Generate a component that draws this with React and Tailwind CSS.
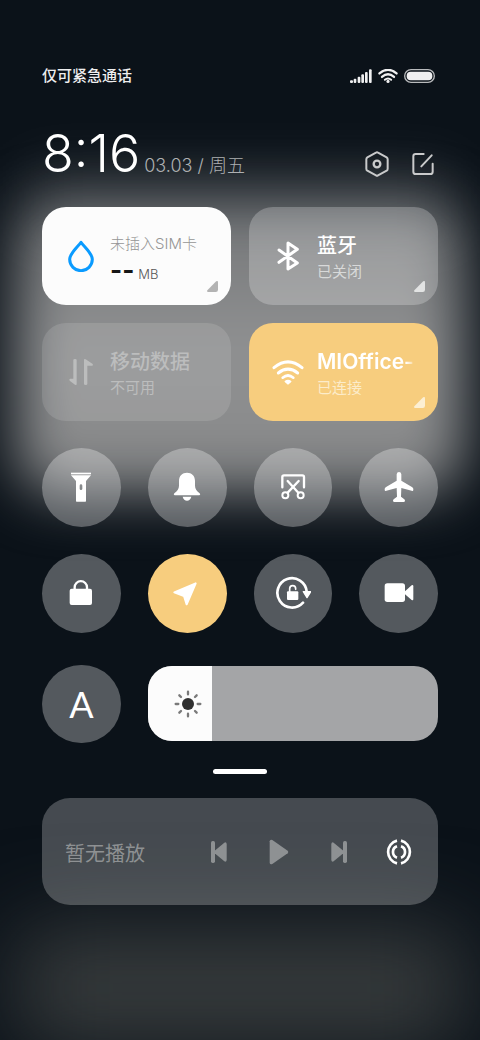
import { useState } from "react";

function Glyph({ children, className = "size-8" }) {
  return (
    <svg viewBox="-48 -48 96 96" className={className} fill="currentColor" aria-hidden="true">
      {children}
    </svg>
  );
}

const line = {
  fill: "none",
  stroke: "currentColor",
  strokeLinecap: "round",
  strokeLinejoin: "round",
};

const DropIcon = () => (
  <Glyph className="size-8 text-[#0a9bff]">
    <path {...line} strokeWidth="9" d="M0 -41C10 -27 34 -8 34 10A34 34 0 0 1 -34 10C-34 -8 -10 -27 0 -41Z" />
  </Glyph>
);

const BluetoothIcon = () => (
  <Glyph>
    <path {...line} strokeWidth="9" d="M-27 -18L28 21L0 39V-39L28 -20L-27 19" />
  </Glyph>
);

const DataIcon = () => (
  <Glyph>
    <path d="M-23 -36Q-23 -39 -18 -39T-13 -36V36Q-13 41 -18 38L-34 26Q-37 20 -32 20H-23Z" />
    <path d="M19 36Q19 39 14 39T9 36V-36Q9 -41 14 -38L35 -24Q38 -19 33 -19H19Z" />
  </Glyph>
);

const WifiIcon = () => (
  <Glyph>
    <path {...line} strokeWidth="9" d="M-42 -13Q0 -48 42 -13" />
    <path {...line} strokeWidth="9" d="M-29 3Q0 -20 29 3" />
    <path {...line} strokeWidth="8" d="M-16 17Q0 4 16 17" />
    <path d="M-10 27Q0 19 10 27Q11 29 9 31L2 37Q0 39 -2 37L-9 31Q-11 29 -10 27Z" />
  </Glyph>
);

const TorchIcon = () => (
  <Glyph>
    <path d="M-30 -43H30V-38H-30Z" />
    <path
      fillRule="evenodd"
      d="M-30 -35H30L15 -18V42Q15 44 13 44H-13Q-15 44 -15 42V-18ZM-4 -4V5A4 4 0 0 0 4 5V-4A4 4 0 0 0 -4 -4Z"
    />
  </Glyph>
);

const BellIcon = () => (
  <Glyph>
    <path d="M-24 -18C-24 -34 -14 -43 0 -43S24 -34 24 -18V-4C24 6 30 12 38 19Q42 24 37 25H-37Q-42 24 -38 19C-30 12 -24 6 -24 -4Z" />
    <path d="M-13 29H13C11 37 6 41 0 41S-11 37 -13 29Z" />
  </Glyph>
);

const ScissorsIcon = () => (
  <Glyph>
    <path {...line} strokeWidth="7" d="M-32 1V-30Q-32 -35 -27 -35H28Q33 -35 33 -30V1" />
    <path {...line} strokeWidth="7" d="M-16 17L17 -18M16 17L-16 -18" />
    <circle {...line} strokeWidth="6" cx="-23" cy="25" r="9" />
    <circle {...line} strokeWidth="6" cx="23" cy="25" r="9" />
  </Glyph>
);

const PlaneIcon = () => (
  <Glyph>
    <path d="M-7 -38Q-6 -45 0 -45T7 -38V-19L40 1Q44 5 43 9Q42 13 38 11L7 3L6 29L16 37Q18 39 18 42Q17 45 14 45H-14Q-17 45 -18 42Q-18 39 -16 37L-6 29L-7 3L-38 11Q-42 13 -43 9Q-44 5 -40 1L-7 -19Z" />
  </Glyph>
);

const LockIcon = () => (
  <Glyph>
    <rect x="-34" y="-13" width="67" height="49" rx="6" />
    <path {...line} strokeWidth="7" d="M-19 -12V-17A18.500 18.500 0 0 1 18 -17V-12" />
  </Glyph>
);

const LocationIcon = () => (
  <Glyph>
    <path stroke="currentColor" strokeWidth="6" strokeLinejoin="round" d="M26 -29L-38 -2L-9 9L-1 34Z" />
  </Glyph>
);

const RotationIcon = () => (
  <Glyph className="size-9">
    <g transform="scale(0.889)">
      <path {...line} strokeWidth="8" d="M30 29A44 44 0 1 1 41 -4" />
      <path stroke="currentColor" strokeWidth="4" strokeLinejoin="round" d="M31 -4H53L42 14Z" />
      <rect x="-18" y="-5" width="34" height="26" rx="3" />
      <path {...line} strokeWidth="5" d="M-10 -4V-13A9 9 0 0 1 8 -13V-11" />
    </g>
  </Glyph>
);

const VideoIcon = () => (
  <Glyph>
    <rect x="-43" y="-29" width="61" height="56" rx="8" />
    <path d="M18 -5L38 -23Q43 -26 43 -20V18Q43 24 38 21L18 4Z" />
  </Glyph>
);

const SunIcon = () => (
  <Glyph>
    <circle r="18" fill="#303030" />
    <path
      {...line}
      stroke="#7a7a7a"
      strokeWidth="7"
      d="M0 -37V-29M0 29V37M-37 0H-29M29 0H37M-26 -26L-21 -21M21 21L26 26M-26 26L-21 21M21 -21L26 -26"
    />
  </Glyph>
);

const PreviousIcon = () => (
  <Glyph>
    <rect x="-24" y="-33" width="12" height="66" rx="5" />
    <path d="M-13 -4L16 -28Q22 -31 23 -24V24Q22 31 16 28L-13 4Q-16 0 -13 -4Z" />
  </Glyph>
);

const NextIcon = () => (
  <Glyph>
    <rect x="12" y="-33" width="12" height="66" rx="5" />
    <path d="M13 -4L-16 -28Q-22 -31 -23 -24V24Q-22 31 -16 28L13 4Q16 0 13 -4Z" />
  </Glyph>
);

const PlayIcon = () => (
  <Glyph>
    <path d="M-28 -32Q-27 -39 -20 -36L26 -4Q30 0 26 4L-20 36Q-27 39 -28 32Z" />
  </Glyph>
);

const CastIcon = () => (
  <Glyph>
    <path
      {...line}
      strokeWidth="8"
      strokeLinecap="butt"
      d="M-6 -34A35 35 0 0 0 -6 34M6 -34A35 35 0 0 1 6 34M-6 -17A18 18 0 0 0 -6 17M6 -17A18 18 0 0 1 6 17"
    />
  </Glyph>
);

function SignalIcon() {
  return (
    <svg viewBox="0 0 66 42" className="h-[14px] w-[22px]" fill="currentColor" aria-hidden="true">
      <rect x="0" y="34" width="9" height="8" rx="3" />
      <rect x="11" y="29" width="8" height="13" rx="3" />
      <rect x="23" y="23" width="8" height="19" rx="3" />
      <rect x="34" y="16" width="8" height="26" rx="3" />
      <rect x="45" y="9" width="8" height="33" rx="3" />
      <rect x="57" y="1" width="8" height="41" rx="3" />
    </svg>
  );
}

function StatusWifiIcon() {
  return (
    <svg viewBox="-31 0 62 44" className="h-[14px] w-5" aria-hidden="true">
      <path {...line} strokeWidth="7" d="M-27 14Q0 -9 27 14" />
      <path {...line} strokeWidth="7" d="M-19 25Q0 8 19 25" />
      <path {...line} strokeWidth="6" d="M-10 34Q0 25 10 34" />
      <circle cx="0" cy="39" r="5" fill="currentColor" />
    </svg>
  );
}

function BatteryIcon() {
  return (
    <svg viewBox="0 0 93 42" className="h-[14px] w-[31px]" aria-hidden="true">
      <rect x="2" y="2" width="89" height="38" rx="19" fill="none" stroke="#b9bbbd" strokeWidth="4" />
      <rect x="8" y="8" width="77" height="26" rx="12" fill="currentColor" />
    </svg>
  );
}

function Tile({ icon, className, corner, children }) {
  return (
    <button
      type="button"
      className={`relative flex h-[98px] items-center gap-[13px] overflow-hidden rounded-3xl pl-[23px] pr-[22px] text-left ${className}`}
    >
      <span className="shrink-0">{icon}</span>
      <span className="min-w-0 flex-1 pt-1">{children}</span>
      {corner && (
        <svg viewBox="0 0 30 30" className={`absolute bottom-[13px] right-[13px] size-[11px] ${corner}`} fill="currentColor" aria-hidden="true">
          <path d="M25 1Q30 -2 30 4V24Q30 30 24 30H4Q-2 30 1 25Z" />
        </svg>
      )}
    </button>
  );
}

function Toggle({ label, icon, active }) {
  return (
    <button
      type="button"
      aria-label={label}
      aria-pressed={Boolean(active)}
      className={`flex aspect-square w-full items-center justify-center rounded-full ${active ? "bg-[#f7cd7e]" : "bg-white/30"}`}
    >
      {icon}
    </button>
  );
}

const toggles = [
  { label: "手电筒", icon: <TorchIcon /> },
  { label: "响铃", icon: <BellIcon /> },
  { label: "截屏", icon: <ScissorsIcon /> },
  { label: "飞行模式", icon: <PlaneIcon /> },
  { label: "锁屏", icon: <LockIcon /> },
  { label: "位置信息", icon: <LocationIcon />, active: true },
  { label: "方向锁定", icon: <RotationIcon /> },
  { label: "屏幕录制", icon: <VideoIcon /> },
];

function Brightness() {
  const [value, setValue] = useState(22);
  return (
    <label className="relative col-span-3 flex h-[75px] items-center self-center overflow-hidden rounded-3xl bg-[#a4a5a7]">
      <span className="absolute inset-y-0 left-0 bg-[#fcfcfc]" style={{ width: `${value}%` }} />
      <span className="relative pl-6">
        <SunIcon />
      </span>
      <input
        type="range"
        min="0"
        max="100"
        value={value}
        onChange={(e) => setValue(Number(e.target.value))}
        aria-label="亮度"
        className="absolute inset-0 size-full cursor-pointer opacity-0"
      />
    </label>
  );
}

export default function App() {
  return (
    <div className="relative isolate min-h-screen overflow-hidden bg-[#0b1219] font-['Inter','Noto_Sans_CJK_SC',sans-serif] text-white">
      <div className="absolute inset-x-4 top-[204px] -z-10 h-[290px] rounded-[40px] bg-linear-to-b from-[#727476] via-[#919293] to-[#858687] blur-[28px]" />
      <div className="absolute inset-x-6 top-[170px] -z-10 h-[60px] bg-white/12 blur-[30px]" />
      <div className="absolute inset-x-4 -bottom-2 -z-10 h-[120px] bg-[#383c3d] blur-[44px]" />

      <main className="mx-auto max-w-xl px-[42px] pb-10 pt-[66px]">
        <header>
          <div className="flex h-5 items-center justify-between">
            <p className="text-[15px] font-medium leading-[22px] text-[#eeeeef]">仅可紧急通话</p>
            <div className="flex items-center gap-[6px] pr-[3px] text-[#f0f0f1]">
              <SignalIcon />
              <StatusWifiIcon />
              <BatteryIcon />
            </div>
          </div>

          <div className="mt-[38px] flex h-[60px] items-end justify-between">
            <div className="flex items-baseline gap-1">
              <time className="text-[52px] font-light leading-[60px]">8:16</time>
              <p className="whitespace-nowrap text-lg font-light leading-6 text-[#aeb0b2]">03.03 / 周五</p>
            </div>
            <div className="flex items-center gap-5 pb-[7px] pr-[2px] text-[#c9cacb]">
              <button type="button" aria-label="设置">
                <svg viewBox="-39 -39 78 78" className="size-[26px]" aria-hidden="true">
                  <path {...line} strokeWidth="6" d="M-3 -34Q0 -36 3 -34L29 -20Q32 -18 32 -14V14Q32 18 29 20L3 34Q0 36 -3 34L-29 20Q-32 18 -32 14V-14Q-32 -18 -29 -20Z" />
                  <circle {...line} strokeWidth="7" r="10" />
                </svg>
              </button>
              <button type="button" aria-label="编辑">
                <svg viewBox="-39 -39 78 78" className="size-[26px]" aria-hidden="true">
                  <path {...line} strokeWidth="6" d="M2 -30H-22Q-29 -30 -29 -23V23Q-29 30 -22 30H22Q29 30 29 23V-1M-5 7L26 -26" />
                </svg>
              </button>
            </div>
          </div>
        </header>

        <section className="mt-[23px] grid grid-cols-2 gap-[18px]">
          <Tile icon={<DropIcon />} className="bg-[#fcfcfc]" corner="text-[#b3b3b3]">
            <span className="block whitespace-nowrap text-[15px] font-light leading-6 text-[#959595]">未插入SIM卡</span>
            <span className="flex items-baseline gap-1 text-[#161616]">
              <span className="text-[26px] font-bold leading-7">--</span>
              <span className="text-[13px] font-light text-[#555]">MB</span>
            </span>
          </Tile>
          <Tile icon={<BluetoothIcon />} className="bg-white/24" corner="text-[#e2e3e3]">
            <span className="block whitespace-nowrap text-xl font-medium leading-7">蓝牙</span>
            <span className="block text-[15px] leading-6 text-[#d8d9d9]">已关闭</span>
          </Tile>
          <Tile icon={<DataIcon />} className="bg-white/12 text-[#bcbdbd]">
            <span className="block whitespace-nowrap text-xl font-medium leading-7">移动数据</span>
            <span className="block text-[15px] leading-6">不可用</span>
          </Tile>
          <Tile icon={<WifiIcon />} className="bg-[#f7cd7e]" corner="text-[#fcefd3]">
            <span className="block overflow-hidden whitespace-nowrap text-[21px] font-semibold leading-7 mask-r-from-90%">MIOffice-</span>
            <span className="block text-[15px] leading-6 text-[#fcecca]">已连接</span>
          </Tile>
        </section>

        <section className="mt-[27px] grid grid-cols-4 gap-[27px]">
          {toggles.map((t) => (
            <Toggle key={t.label} {...t} />
          ))}
        </section>

        <section className="mt-8 grid grid-cols-4 gap-[27px]">
          <button
            type="button"
            aria-label="自动亮度"
            className="flex aspect-square w-full items-center justify-center rounded-full bg-white/30 font-['Lato'] text-4xl"
          >
            A
          </button>
          <Brightness />
        </section>

        <div className="mx-auto mt-[26px] h-[5px] w-[54px] rounded-full bg-white" />

        <section className="mt-6 flex h-[107px] items-center justify-between rounded-[28px] bg-white/24 px-[23px] text-[#8e9193]">
          <p className="whitespace-nowrap pt-1 text-xl">暂无播放</p>
          <div className="flex items-center gap-7">
            <button type="button" aria-label="上一首"><PreviousIcon /></button>
            <button type="button" aria-label="播放"><PlayIcon /></button>
            <button type="button" aria-label="下一首"><NextIcon /></button>
            <button type="button" aria-label="投放" className="text-white"><CastIcon /></button>
          </div>
        </section>
      </main>
    </div>
  );
}
